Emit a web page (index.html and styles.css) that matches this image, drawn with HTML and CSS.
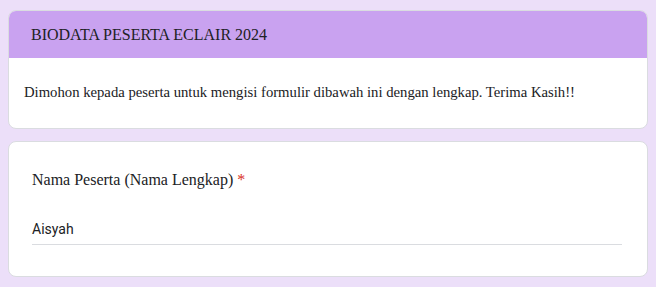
FILE: index.html
```html
<!DOCTYPE html>
<html lang="en">
<head>
    <meta charset="UTF-8">
    <title>Biodata Peserta Eclair 2024</title>
    <link rel="stylesheet" href="styles.css">
</head>
<body>
    <div class="container">
        <div class="card intro">
            <div class="card-header">BIODATA PESERTA ECLAIR 2024</div>
            <div class="card-body">
                Dimohon kepada peserta untuk mengisi formulir dibawah ini dengan lengkap. Terima Kasih!!
            </div>
        </div>

        <div class="card question">
            <div class="question-title">Nama Peserta (Nama Lengkap) <span class="required">*</span></div>
            <div class="answer">Aisyah</div>
        </div>
    </div>
</body>
</html>
```

FILE: styles.css
```css
body {
    font-family: "Liberation Serif", "Times New Roman", serif;
    margin: 0;
    padding: 10px 0;
    background: #ecdff9;
    color: #202124;
}
.container {
    width: 640px;
    margin: 0 auto;
}
.card {
    background: white;
    border: 1px solid #dadce0;
    border-radius: 8px;
    overflow: hidden;
    margin-bottom: 12px;
}
.card-header {
    background: #c9a2f0;
    font-size: 16px;
    height: 47px;
    line-height: 47px;
    padding: 0 22px;
}
.card-body {
    font-size: 14.7px;
    padding: 24px 15px 26px;
    line-height: 20px;
}
.question {
    padding: 26px 24px 31px 23px;
}
.question-title {
    font-size: 16px;
    line-height: 24px;
}
.required {
    color: #d93025;
}
.answer {
    font-family: Roboto, sans-serif;
    font-size: 14px;
    margin-top: 29px;
    padding-bottom: 7px;
    border-bottom: 1px solid #dadce0;
    width: 590px;
}
```
